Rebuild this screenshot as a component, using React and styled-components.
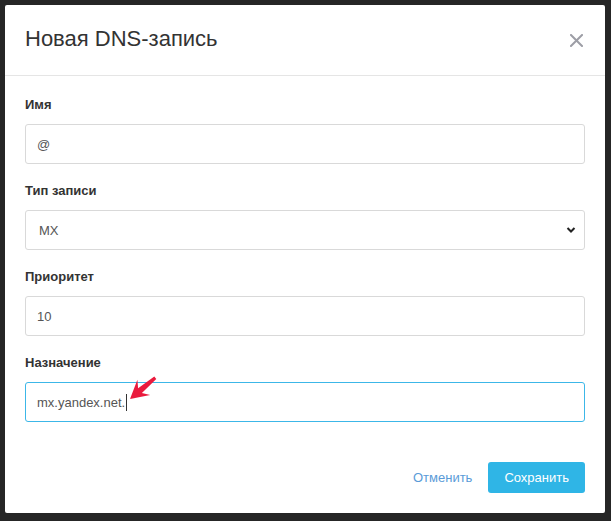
import React from 'react';
import styled, { createGlobalStyle } from 'styled-components';

const Global = createGlobalStyle`
  html, body { margin: 0; padding: 0; background: #262626; }
  body { font-family: "Liberation Sans", Arial, Helvetica, sans-serif; }
  * { box-sizing: border-box; }
`;

const Backdrop = styled.div`
  min-height: 521px;
  padding: 5px 6px 8px 5px;
  background: #262626;
`;

const Modal = styled.div`
  width: 600px;
  background: #fff;
  border-radius: 2px;
  display: flex;
  flex-direction: column;
`;

const Header = styled.div`
  height: 71px;
  padding: 0 22px 0 20px;
  display: flex;
  align-items: center;
  justify-content: space-between;
  border-bottom: 1px solid #e5e5e5;
`;

const Title = styled.h4`
  margin: 0;
  font-size: 22px;
  font-weight: 400;
  color: #333;
  line-height: 1.1;
  margin-top: -1px;
`;

const CloseButton = styled.button`
  border: none;
  background: none;
  padding: 0;
  width: 13px;
  height: 13px;
  display: flex;
  cursor: pointer;
`;

const Body = styled.div`
  padding: 19px 20px 20px;
`;

const Group = styled.div`
  margin-bottom: ${p => (p.$last ? 0 : 17)}px;
`;

const Label = styled.label`
  display: block;
  font-size: 13px;
  font-weight: 700;
  line-height: 20px;
  color: #333;
  margin-bottom: 9px;
`;

const Field = styled.div`
  position: relative;
  height: 40px;
  border: 1px solid ${p => (p.$focused ? '#3cb7e8' : '#d9d9d9')};
  border-radius: 3px;
  padding: 0 ${p => (p.$select ? 8 : 11)}px 0 ${p => (p.$select ? 13 : 11)}px;
  display: flex;
  align-items: center;
  justify-content: space-between;
  font-size: 13px;
  color: #555;
`;

const Value = styled.span`
  display: inline-flex;
  align-items: center;
`;

const Caret = styled.span`
  display: inline-block;
  width: 1px;
  height: 17px;
  background: #333;
  margin-left: 1px;
`;

const Annotation = styled.svg`
  position: absolute;
  left: 97px;
  top: -12px;
  overflow: visible;
`;

const Footer = styled.div`
  display: flex;
  justify-content: flex-end;
  align-items: center;
  gap: 16px;
  padding: 20px 20px 20px;
`;

const CancelLink = styled.a`
  color: #5a9bd8;
  font-size: 13px;
  text-decoration: none;
  cursor: pointer;
`;

const SaveButton = styled.button`
  height: 31px;
  padding: 0 16px;
  border: none;
  border-radius: 3px;
  background: #2fb5e6;
  color: #fff;
  font-family: inherit;
  font-size: 13px;
  cursor: pointer;
`;

function CloseIcon() {
  return (
    <svg width="13" height="13" viewBox="0 0 13 13">
      <path d="M1 1 L12 12 M12 1 L1 12" stroke="#9d9ea6" strokeWidth="2" strokeLinecap="square" />
    </svg>
  );
}

function Chevron() {
  return (
    <svg width="10" height="8" viewBox="0 0 10 8">
      <path d="M1.5 2 L5 5.5 L8.5 2" fill="none" stroke="#222" strokeWidth="2" />
    </svg>
  );
}

function RedArrow() {
  return (
    <Annotation width="40" height="34" viewBox="0 0 40 34">
      <polygon
        points="7,28 27.2,24.1 18.9,21.9 33.3,7.9 31.3,5.5 15.1,17.3 14.4,8.7"
        fill="#ea1a3d"
      />
    </Annotation>
  );
}

export default function App() {
  return (
    <>
      <Global />
      <Backdrop>
        <Modal>
          <Header>
            <Title>Новая DNS-запись</Title>
            <CloseButton aria-label="Закрыть"><CloseIcon /></CloseButton>
          </Header>
          <Body>
            <Group>
              <Label>Имя</Label>
              <Field><Value>@</Value></Field>
            </Group>
            <Group>
              <Label>Тип записи</Label>
              <Field $select><Value>MX</Value><Chevron /></Field>
            </Group>
            <Group>
              <Label>Приоритет</Label>
              <Field><Value>10</Value></Field>
            </Group>
            <Group $last>
              <Label>Назначение</Label>
              <Field $focused>
                <Value>mx.yandex.net.<Caret /></Value>
                <RedArrow />
              </Field>
            </Group>
          </Body>
          <Footer>
            <CancelLink>Отменить</CancelLink>
            <SaveButton>Сохранить</SaveButton>
          </Footer>
        </Modal>
      </Backdrop>
    </>
  );
}
